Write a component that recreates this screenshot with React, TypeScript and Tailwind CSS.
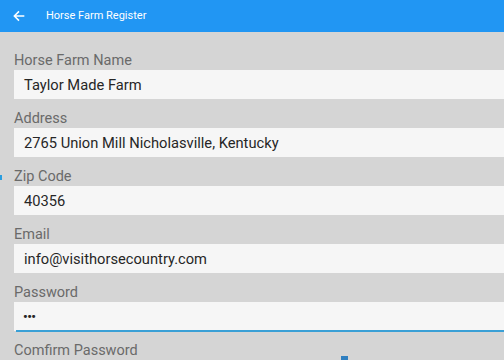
import React from 'react';

const fields = [
  { label: 'Horse Farm Name', value: 'Taylor Made Farm' },
  { label: 'Address', value: '2765 Union Mill Nicholasville, Kentucky' },
  { label: 'Zip Code', value: '40356' },
  { label: 'Email', value: 'info@visithorsecountry.com' },
  { label: 'Password', value: '•••', focused: true },
  { label: 'Comfirm Password', value: '' },
];

const Field: React.FC<{ label: string; value: string; focused?: boolean }> = ({
  label,
  value,
  focused,
}) => (
  <div className="flex flex-col">
    <div className="h-[20px] leading-[21px] text-[14.5px] text-[#6a6a6a]">{label}</div>
    <div className="flex flex-col h-[29px] w-[520px] bg-[#f6f6f6]">
      <div
        className={
          focused
            ? 'flex-1 pl-[9px] pt-[3px] text-[13px] font-bold leading-[24px] tracking-[-0.5px] text-[#262626]'
            : 'flex-1 pl-[10px] pt-[3px] leading-[25px] text-[14.7px] text-[#262626]'
        }
      >
        {value}
      </div>
      {focused ? (
        <div className="ml-[2px] h-[2px] mb-[-1px] bg-[#3aa0d6]" />
      ) : (
        <div className="ml-[3px] h-px mb-px bg-[#9a9a9a]" />
      )}
    </div>
  </div>
);

const App: React.FC = () => {
  return (
    <div
      className="relative w-[504px] h-[360px] overflow-hidden bg-[#d5d5d5]"
      style={{ fontFamily: 'Roboto, "Liberation Sans", sans-serif' }}
    >
      <div className="h-[32px] bg-[#2196f3] flex items-center">
        <svg className="ml-[11px]" width="16" height="16" viewBox="0 0 24 24" fill="none">
          <path d="M20 12H5M12 5l-7 7 7 7" stroke="#fff" strokeWidth="2.3" />
        </svg>
        <span className="ml-[19px] text-[11px] text-white">Horse Farm Register</span>
      </div>

      <div className="flex flex-col gap-[9px] pl-[14px] pt-[18px]">
        {fields.map(f => (
          <Field key={f.label} label={f.label} value={f.value} focused={f.focused} />
        ))}
      </div>

      <div className="absolute left-0 top-[175px] w-[2px] h-[5px] bg-[#2a9ee0]" />
      <div className="absolute left-[341px] top-[356px] w-[7px] h-[4px] bg-[#2f7fc0]" />
    </div>
  );
};

export default App;
